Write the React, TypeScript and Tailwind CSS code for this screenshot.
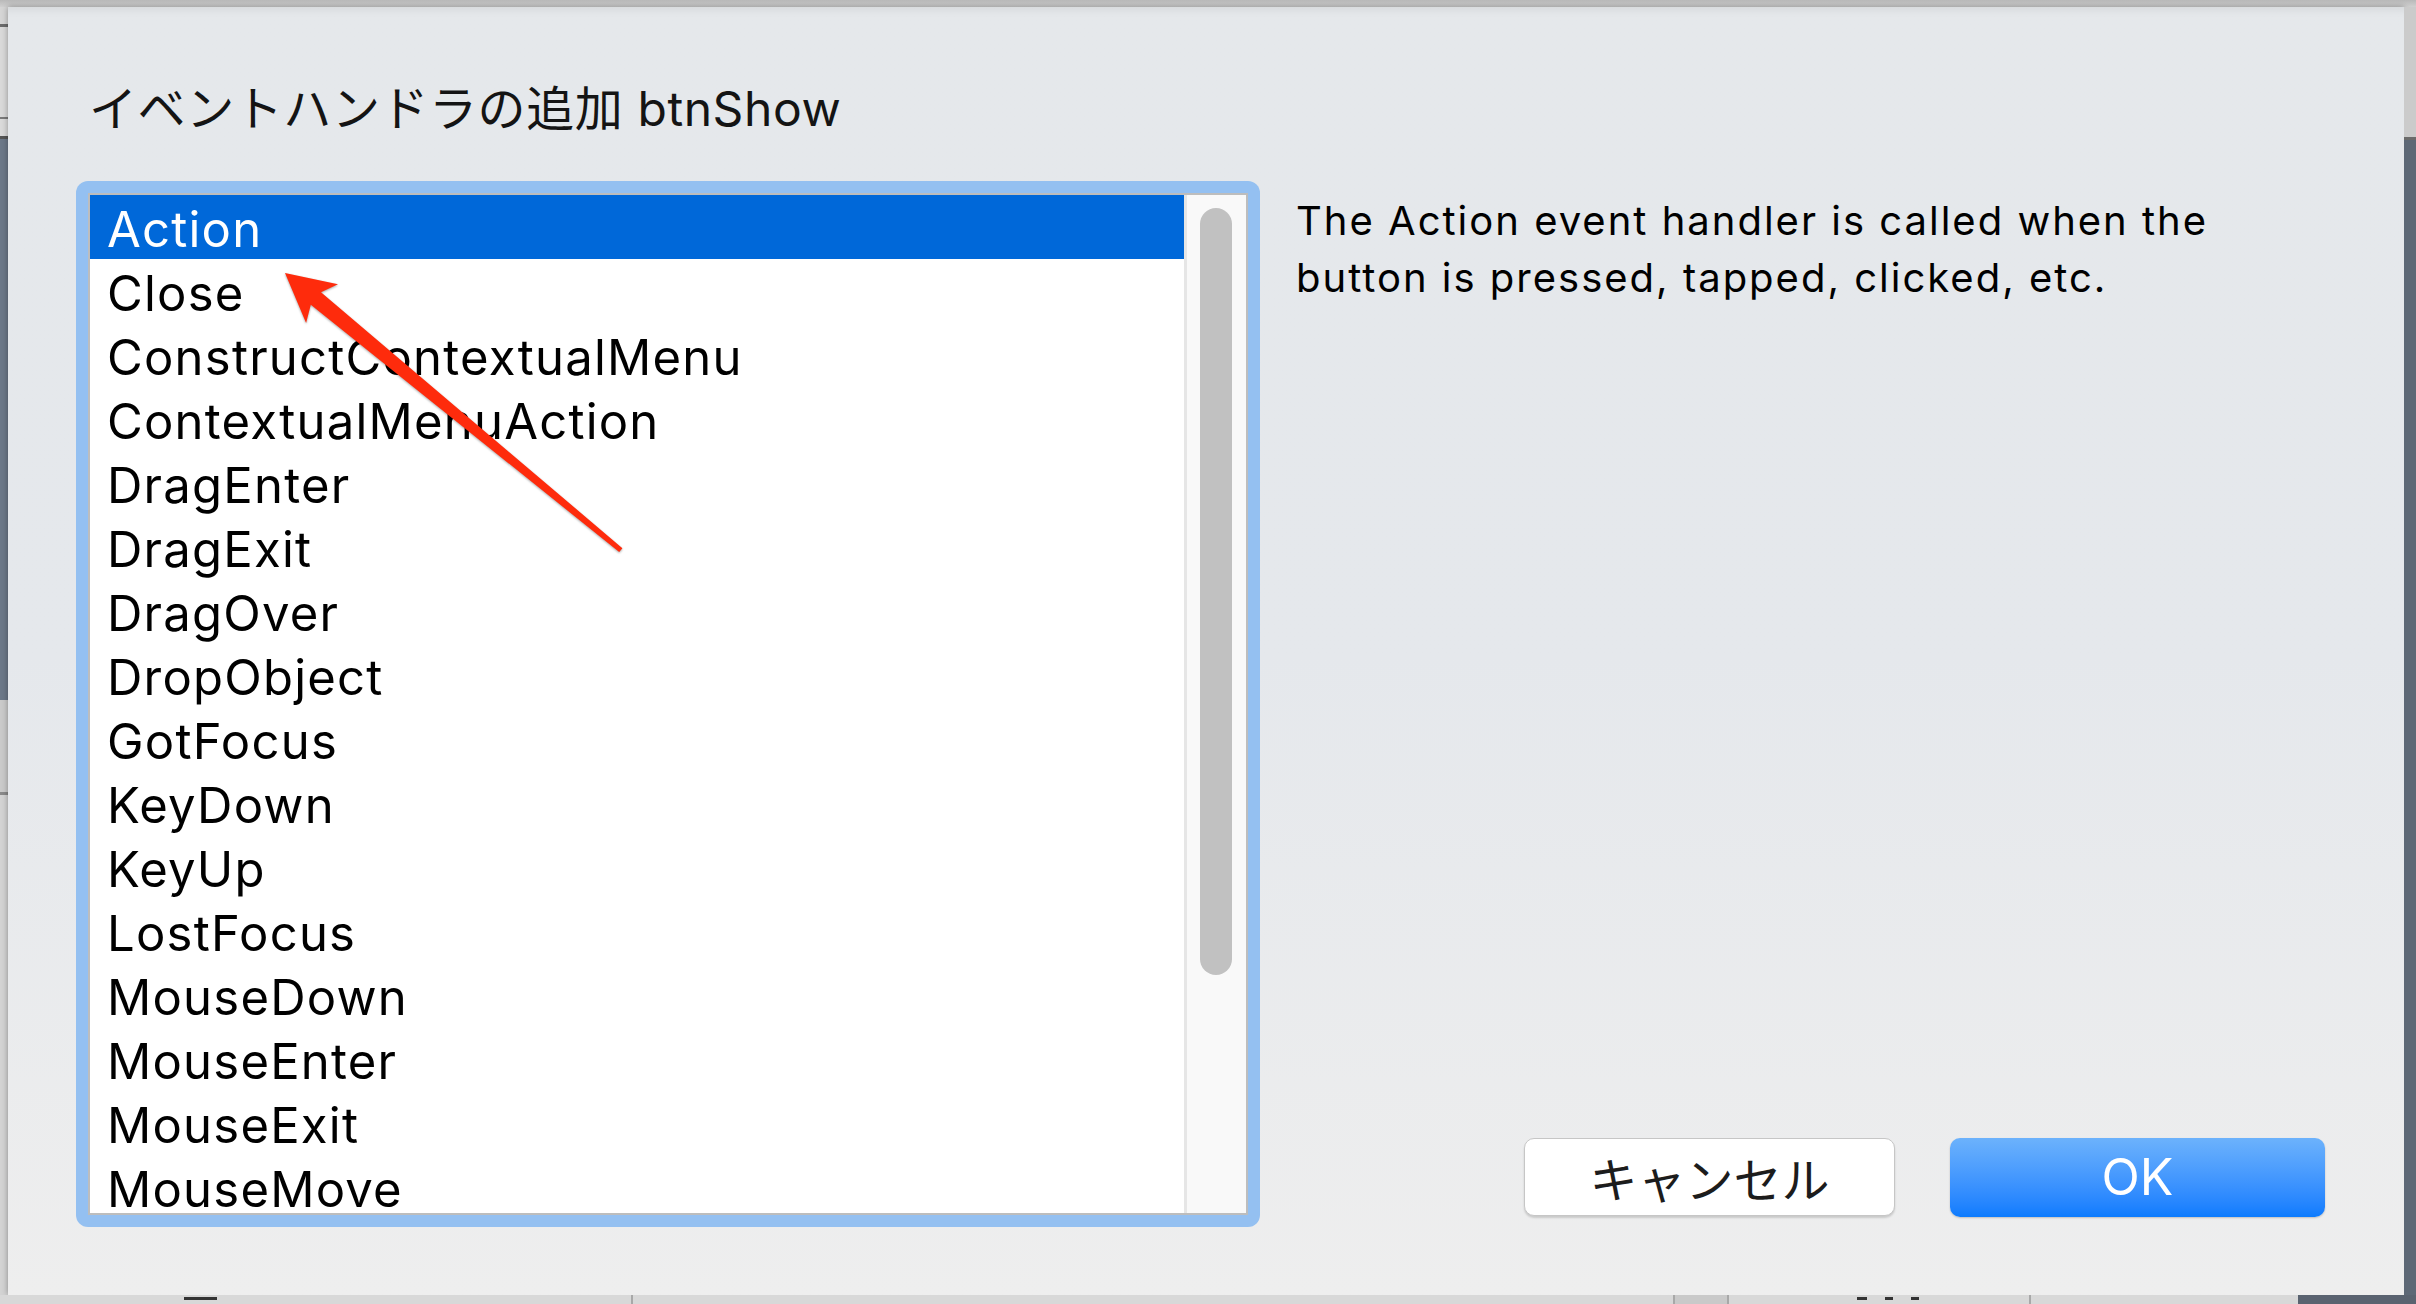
import React from "react";

const events = [
  "Action",
  "Close",
  "ConstructContextualMenu",
  "ContextualMenuAction",
  "DragEnter",
  "DragExit",
  "DragOver",
  "DropObject",
  "GotFocus",
  "KeyDown",
  "KeyUp",
  "LostFocus",
  "MouseDown",
  "MouseEnter",
  "MouseExit",
  "MouseMove",
];

const LeftStrip = () => (
  <div className="w-[8px] flex flex-col shrink-0">
    <div className="h-[17px] bg-[#d5d5d5]" />
    <div className="h-[3px] bg-[#6b6b6b]" />
    <div className="h-[90px] bg-[#d9d9d9]" />
    <div className="h-[2px] bg-[#7a7a7a]" />
    <div className="h-[17px] bg-[#dadada]" />
    <div className="h-[3px] bg-[#555555]" />
    <div className="h-[561px] bg-[#6c7888]" />
    <div className="h-[92px] bg-[#cacaca]" />
    <div className="h-[3px] bg-[#8a8a8a]" />
    <div className="flex-1 bg-[#d3d3d3]" />
  </div>
);

const RightStrip = () => (
  <div className="w-[12px] flex flex-col shrink-0">
    <div className="h-[130px] bg-[#cbcbcb]" />
    <div className="h-[3px] bg-[#6b6b6b]" />
    <div className="flex-1 bg-[#5d6876]" />
  </div>
);

const BottomStrip = () => (
  <div className="h-[9px] flex shrink-0 bg-[#d8d8d8]">
    <div className="w-[184px]" />
    <div className="w-[33px] h-[3px] mt-[2px] bg-[#333333]" />
    <div className="w-[414px]" />
    <div className="w-[2px] bg-[#a8a8a8]" />
    <div className="w-[1040px]" />
    <div className="w-[2px] bg-[#a8a8a8]" />
    <div className="w-[52px] bg-[#c9c9c9]" />
    <div className="w-[2px] bg-[#a8a8a8]" />
    <div className="w-[128px]" />
    <div className="w-[10px] h-[3px] mt-[2px] bg-[#333333]" />
    <div className="w-[18px]" />
    <div className="w-[8px] h-[3px] mt-[2px] bg-[#333333]" />
    <div className="w-[18px]" />
    <div className="w-[8px] h-[3px] mt-[2px] bg-[#333333]" />
    <div className="w-[110px]" />
    <div className="w-[2px] bg-[#a8a8a8]" />
    <div className="w-[267px]" />
    <div className="flex-1 bg-[#5a6370]" />
  </div>
);

const EventList = () => (
  <div className="w-[1184px] h-[1046px] rounded-[12px] bg-[#94c0f1] p-[12px] shrink-0">
    <div className="h-full border-2 border-[#bdbdbd] bg-white flex overflow-hidden">
      <div className="w-[1094px] overflow-hidden">
        {events.map((name, i) => (
          <div
            key={name}
            className={
              i === 0
                ? "h-[64px] pt-[6px] pl-[17px] leading-[58px] text-[49px] tracking-[0.025em] bg-[#0068d9] text-white whitespace-nowrap"
                : "h-[64px] pt-[6px] pl-[17px] leading-[58px] text-[49px] tracking-[0.025em] text-black whitespace-nowrap"
            }
          >
            {name}
          </div>
        ))}
      </div>
      <div className="flex-1 border-l-[3px] border-[#e6e6e6] bg-[#f9f9f9] pt-[13px] pl-[13px]">
        <div className="w-[32px] h-[767px] rounded-full bg-[#c1c1c1]" />
      </div>
    </div>
  </div>
);

const Arrow = () => (
  <svg
    className="absolute inset-0 w-full h-full pointer-events-none drop-shadow-[0_1px_1px_rgba(0,0,0,0.35)]"
    viewBox="0 0 2416 1304"
  >
    <polygon
      points="285,273 338,284.3 321,292.3 622.4,548.2 619.2,552 310.8,304.7 306.1,322.9"
      fill="#fe2b0c"
    />
  </svg>
);

export default function App() {
  return (
    <div className="relative w-[2416px] h-[1304px] overflow-hidden flex flex-col bg-[#d8d8d8] font-['Inter','Noto_Sans_CJK_JP',sans-serif]">
      <div className="h-[7px] shrink-0 bg-gradient-to-b from-[#b9b9b9] to-[#d0d0d0]" />
      <div className="flex flex-1 min-h-0">
        <LeftStrip />
        <div className="flex-1 flex flex-col bg-gradient-to-b from-[#e5e8eb] via-[#e5e8ec] to-[#eeeeee] shadow-[inset_0_10px_10px_-8px_rgba(0,0,0,0.08),0_0_6px_rgba(0,0,0,0.35)]">
          <div className="pt-[73px] pl-[81px] text-[48px] leading-[57px] tracking-[0.012em] text-[#141414]">
            イベントハンドラの追加 btnShow
          </div>
          <div className="mt-[44px] flex pl-[68px] pr-[79px]">
            <EventList />
            <div className="flex-1 flex flex-col justify-between ml-[36px]">
              <p className="mt-[11px] max-w-[950px] text-[40px] leading-[57px] tracking-[0.05em] text-black">
                The Action event handler is called when the button is pressed, tapped, clicked, etc.
              </p>
              <div className="flex justify-end gap-[55px] mb-[10px]">
                <button className="w-[371px] h-[78px] rounded-[10px] bg-white border border-[#c6c6c6] shadow-[0_2px_2px_rgba(0,0,0,0.15)] text-[48px] text-[#1c1c1c] font-['Noto_Sans_CJK_JP',sans-serif]">
                  キャンセル
                </button>
                <button className="w-[375px] h-[79px] rounded-[10px] bg-gradient-to-b from-[#6cb2fc] to-[#0b7bfe] shadow-[0_1px_2px_rgba(0,0,0,0.2)] text-[50px] text-white">
                  OK
                </button>
              </div>
            </div>
          </div>
        </div>
        <RightStrip />
      </div>
      <BottomStrip />
      <Arrow />
    </div>
  );
}
